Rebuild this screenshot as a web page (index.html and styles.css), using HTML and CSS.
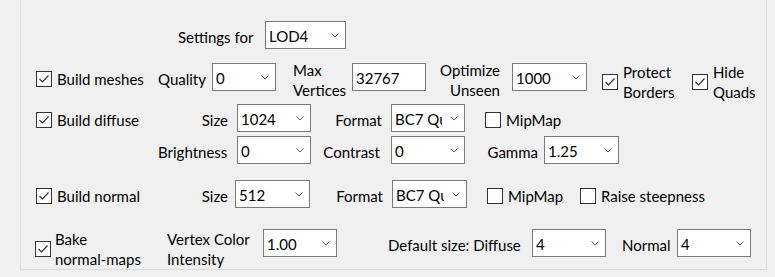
FILE: index.html
```html
<!DOCTYPE html>
<html lang="en">
<head>
    <meta charset="UTF-8">
    <meta name="viewport" content="width=device-width, initial-scale=1.0">
    <title>LOD Settings</title>
    <link rel="stylesheet" href="styles.css">
</head>
<body>

    <div class="group">

        <!-- LOD selector -->
        <div class="row row-lod">
            <span class="lbl lbl-settings">Settings for</span>
            <div class="combo w81"><span class="val">LOD4</span><svg class="chev" width="8" height="5" viewBox="0 0 8 5"><polyline points="0.5,0.5 4,4 7.5,0.5"/></svg></div>
        </div>

        <!-- Meshes -->
        <div class="row row-mesh">
            <label class="check ml15 w122"><span class="box"><svg width="14" height="14" viewBox="0 0 14 14"><polyline points="2.5,7 5.5,10 11.5,3.5"/></svg></span><span class="txt">Build meshes</span></label>
            <span class="lbl w54">Quality</span>
            <div class="combo w64"><span class="val">0</span><svg class="chev" width="8" height="5" viewBox="0 0 8 5"><polyline points="0.5,0.5 4,4 7.5,0.5"/></svg></div>
            <span class="lbl two w76 pl17 nudge">Max<br>Vertices</span>
            <div class="field w74">32767</div>
            <span class="lbl two w86 right pr12 nudge">Optimize<br>Unseen</span>
            <div class="combo w75"><span class="val">1000</span><svg class="chev" width="8" height="5" viewBox="0 0 8 5"><polyline points="0.5,0.5 4,4 7.5,0.5"/></svg></div>
            <label class="check two lower ml15 w90"><span class="box"><svg width="14" height="14" viewBox="0 0 14 14"><polyline points="2.5,7 5.5,10 11.5,3.5"/></svg></span><span class="txt">Protect<br>Borders</span></label>
            <label class="check two lower"><span class="box"><svg width="14" height="14" viewBox="0 0 14 14"><polyline points="2.5,7 5.5,10 11.5,3.5"/></svg></span><span class="txt">Hide<br>Quads</span></label>
        </div>

        <!-- Diffuse -->
        <div class="row row-diffuse">
            <label class="check ml15 w122"><span class="box"><svg width="14" height="14" viewBox="0 0 14 14"><polyline points="2.5,7 5.5,10 11.5,3.5"/></svg></span><span class="txt">Build diffuse</span></label>
            <span class="lbl right w79 pr9">Size</span>
            <div class="combo w74"><span class="val">1024</span><svg class="chev" width="8" height="5" viewBox="0 0 8 5"><polyline points="0.5,0.5 4,4 7.5,0.5"/></svg></div>
            <span class="lbl right w80 pr9">Format</span>
            <div class="combo w74 clip"><span class="val">BC7 Quality</span><svg class="chev" width="8" height="5" viewBox="0 0 8 5"><polyline points="0.5,0.5 4,4 7.5,0.5"/></svg></div>
            <label class="check ml20"><span class="box"></span><span class="txt">MipMap</span></label>
        </div>

        <div class="row row-adjust">
            <span class="lbl right w79 pr11 ml137">Brightness</span>
            <div class="combo w74"><span class="val">0</span><svg class="chev" width="8" height="5" viewBox="0 0 8 5"><polyline points="0.5,0.5 4,4 7.5,0.5"/></svg></div>
            <span class="lbl right w80 pr11">Contrast</span>
            <div class="combo w74"><span class="val">0</span><svg class="chev" width="8" height="5" viewBox="0 0 8 5"><polyline points="0.5,0.5 4,4 7.5,0.5"/></svg></div>
            <span class="lbl right w79 pr6">Gamma</span>
            <div class="combo w75"><span class="val">1.25</span><svg class="chev" width="8" height="5" viewBox="0 0 8 5"><polyline points="0.5,0.5 4,4 7.5,0.5"/></svg></div>
        </div>

        <!-- Normal -->
        <div class="row row-normal">
            <label class="check ml15 w122"><span class="box"><svg width="14" height="14" viewBox="0 0 14 14"><polyline points="2.5,7 5.5,10 11.5,3.5"/></svg></span><span class="txt">Build normal</span></label>
            <span class="lbl right w77 pr7">Size</span>
            <div class="combo w75"><span class="val">512</span><svg class="chev" width="8" height="5" viewBox="0 0 8 5"><polyline points="0.5,0.5 4,4 7.5,0.5"/></svg></div>
            <span class="lbl right w82 pr9">Format</span>
            <div class="combo w75 clip"><span class="val">BC7 Quality</span><svg class="chev" width="8" height="5" viewBox="0 0 8 5"><polyline points="0.5,0.5 4,4 7.5,0.5"/></svg></div>
            <label class="check ml20 w93"><span class="box"></span><span class="txt">MipMap</span></label>
            <label class="check"><span class="box"></span><span class="txt">Raise steepness</span></label>
        </div>

        <!-- Baking -->
        <div class="row row-bake">
            <label class="check two low ml14 w132 tight"><span class="box"><svg width="14" height="14" viewBox="0 0 14 14"><polyline points="2.5,7 5.5,10 11.5,3.5"/></svg></span><span class="txt">Bake<br>normal-maps</span></label>
            <span class="lbl two low w96">Vertex Color<br>Intensity</span>
            <div class="combo w74"><span class="val">1.00</span><svg class="chev" width="8" height="5" viewBox="0 0 8 5"><polyline points="0.5,0.5 4,4 7.5,0.5"/></svg></div>
            <span class="lbl w195 pl51">Default size: Diffuse</span>
            <div class="combo w74"><span class="val">4</span><svg class="chev" width="8" height="5" viewBox="0 0 8 5"><polyline points="0.5,0.5 4,4 7.5,0.5"/></svg></div>
            <span class="lbl w71 pl16">Normal</span>
            <div class="combo w74"><span class="val">4</span><svg class="chev" width="8" height="5" viewBox="0 0 8 5"><polyline points="0.5,0.5 4,4 7.5,0.5"/></svg></div>
        </div>

    </div>

</body>
</html>
```
FILE: styles.css
```css
body {
    margin: 0;
    background-color: #f0f0f0;
    font-family: Lato, "Noto Sans", sans-serif;
    font-size: 15px;
    color: #000;
    overflow: hidden;
}
.group {
    margin-left: 20px;
    width: 747px;
    height: 270px;
    box-sizing: border-box;
    padding-top: 21px;
    border: 1px solid #dcdcdc;
    border-top: none;
}
.row {
    display: flex;
    align-items: center;
    height: 28px;
}
.row-mesh { margin-top: 14px; }
.row-diffuse { margin-top: 13px; }
.row-adjust { margin-top: 4px; }
.row-normal { margin-top: 16px; }
.row-bake { margin-top: 21px; }

/* labels */
.lbl {
    display: block;
    flex: none;
    box-sizing: border-box;
    white-space: nowrap;
    padding-top: 3px;
}
.lbl.two {
    line-height: 20px;
    padding-top: 0;
}
.right { text-align: right; }
.lbl-settings {
    margin-left: 157px;
    width: 87px;
}

/* checkboxes */
.check {
    display: flex;
    align-items: center;
    flex: none;
    box-sizing: border-box;
    white-space: nowrap;
}
.check .box {
    width: 16px;
    height: 16px;
    box-sizing: border-box;
    border: 1px solid #333;
    background: #fff;
    flex: none;
    margin-top: 3px;
}
.check .box svg {
    display: block;
}
.check .box polyline {
    fill: none;
    stroke: #333;
    stroke-width: 1.2;
}
.check .txt {
    margin-left: 5px;
    padding-top: 3px;
}
.check.two .txt {
    line-height: 20px;
    padding-top: 0;
}
.check.two .box { margin-top: 0; }
.check.tight .txt { margin-left: 4px; }

/* combo boxes and fields */
.combo, .field {
    display: flex;
    align-items: center;
    flex: none;
    height: 28px;
    box-sizing: border-box;
    border: 1px solid #7a7a7a;
    background: #fff;
    padding-left: 3px;
}
.combo .val {
    flex: 1;
    min-width: 0;
    overflow: hidden;
    white-space: nowrap;
    margin-right: 8px;
    padding-top: 2px;
}
.combo .chev {
    flex: none;
    margin-right: 6px;
}
.combo .chev polyline {
    fill: none;
    stroke: #5a5a5a;
    stroke-width: 1;
}
.field { padding-top: 2px; }

/* vertical nudges */
.nudge { margin-top: 5px; }
.lower { margin-top: 10px; }
.low { margin-top: 12px; }

/* sizes and offsets */
.w54 { width: 54px; }
.w64 { width: 64px; }
.w71 { width: 71px; }
.w74 { width: 74px; }
.w75 { width: 75px; }
.w76 { width: 76px; }
.w77 { width: 77px; }
.w79 { width: 79px; }
.w80 { width: 80px; }
.w81 { width: 81px; }
.w82 { width: 82px; }
.w86 { width: 86px; }
.w90 { width: 90px; }
.w93 { width: 93px; }
.w96 { width: 96px; }
.w122 { width: 122px; }
.w132 { width: 132px; }
.w195 { width: 195px; }
.ml14 { margin-left: 14px; }
.ml15 { margin-left: 15px; }
.ml20 { margin-left: 20px; }
.ml137 { margin-left: 137px; }
.pl16 { padding-left: 16px; }
.pl17 { padding-left: 17px; }
.pl51 { padding-left: 51px; }
.pr6 { padding-right: 6px; }
.pr7 { padding-right: 7px; }
.pr9 { padding-right: 9px; }
.pr11 { padding-right: 11px; }
.pr12 { padding-right: 12px; }
```
